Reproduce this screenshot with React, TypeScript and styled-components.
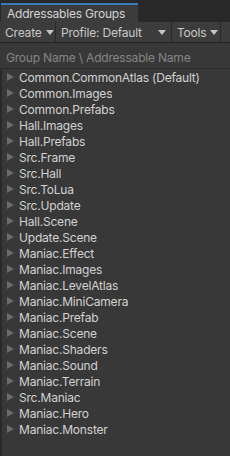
import styled, { createGlobalStyle } from 'styled-components';

const groups = [
  'Common.CommonAtlas (Default)',
  'Common.Images',
  'Common.Prefabs',
  'Hall.Images',
  'Hall.Prefabs',
  'Src.Frame',
  'Src.Hall',
  'Src.ToLua',
  'Src.Update',
  'Hall.Scene',
  'Update.Scene',
  'Maniac.Effect',
  'Maniac.Images',
  'Maniac.LevelAtlas',
  'Maniac.MiniCamera',
  'Maniac.Prefab',
  'Maniac.Scene',
  'Maniac.Shaders',
  'Maniac.Sound',
  'Maniac.Terrain',
  'Src.Maniac',
  'Maniac.Hero',
  'Maniac.Monster',
];

const GlobalStyle = createGlobalStyle`
  html, body {
    margin: 0;
    padding: 0;
    background: #282828;
  }
  body {
    font-family: Inter, "Noto Sans", sans-serif;
    font-size: 12px;
    letter-spacing: -0.2px;
    color: #d2d2d2;
  }
`;

export default function App() {
  return (
    <>
      <GlobalStyle />
      <Window>
        <TabStrip>
          <Tab>Addressables Groups</Tab>
        </TabStrip>
        <Toolbar>
          <ToolButton $width={56}>
            Create <Caret />
          </ToolButton>
          <ToolButton $width={116} $spread>
            Profile: Default <Caret />
          </ToolButton>
          <ToolButton $width={49}>
            Tools <Caret />
          </ToolButton>
          <ToolFill />
        </Toolbar>
        <Header>
          <HeaderLabel>Group Name \ Addressable Name</HeaderLabel>
        </Header>
        <List>
          {groups.map((name) => (
            <Row key={name}>
              <Arrow />
              <RowLabel>{name}</RowLabel>
            </Row>
          ))}
        </List>
      </Window>
    </>
  );
}

const Window = styled.div`
  width: 230px;
  height: 456px;
  display: flex;
  flex-direction: column;
  background: #282828;
  overflow: hidden;
`;

const TabStrip = styled.div`
  display: flex;
  padding-top: 3px;
  padding-left: 1px;
  height: 19px;
`;

const Tab = styled.div`
  width: 137px;
  flex-shrink: 0;
  box-sizing: border-box;
  background: #3c3c3c;
  border-top: 2px solid #3a79bb;
  padding-left: 6px;
  font-size: 12px;
  line-height: 18px;
  color: #d4d4d4;
  white-space: nowrap;
`;

const Toolbar = styled.div`
  display: flex;
  height: 20px;
  background: #3c3c3c;
  border-bottom: 1px solid #232323;
`;

const ToolButton = styled.div<{ $width: number; $spread?: boolean }>`
  width: ${(p) => p.$width}px;
  flex-shrink: 0;
  box-sizing: border-box;
  display: flex;
  align-items: center;
  justify-content: ${(p) => (p.$spread ? 'space-between' : 'flex-start')};
  gap: 4px;
  padding: 0 5px;
  border-right: 1px solid #2a2a2a;
  font-size: 12px;
  color: #c8c8c8;
  white-space: nowrap;
`;

const ToolFill = styled.div`
  flex: 1;
`;

const Caret = styled.span`
  flex-shrink: 0;
  width: 0;
  height: 0;
  border-left: 4px solid transparent;
  border-right: 4px solid transparent;
  border-top: 5px solid #c4c4c4;
`;

const Header = styled.div`
  height: 26px;
  box-sizing: border-box;
  display: flex;
  align-items: flex-end;
  padding: 0 0 3px 6px;
  background: #383838;
  border-bottom: 1px solid #2b2b2b;
`;

const HeaderLabel = styled.span`
  font-size: 12px;
  color: #858585;
  white-space: nowrap;
`;

const List = styled.div`
  flex: 1;
  background: #383838;
  border-left: 2px solid #2a2a2a;
`;

const Row = styled.div`
  height: 16px;
  display: flex;
  align-items: center;
  padding-left: 5px;
  gap: 5px;
`;

const Arrow = styled.span`
  flex-shrink: 0;
  width: 0;
  height: 0;
  border-top: 4px solid transparent;
  border-bottom: 4px solid transparent;
  border-left: 7px solid #6c6c6c;
`;

const RowLabel = styled.span`
  font-size: 12px;
  color: #d2d2d2;
  white-space: nowrap;
`;
